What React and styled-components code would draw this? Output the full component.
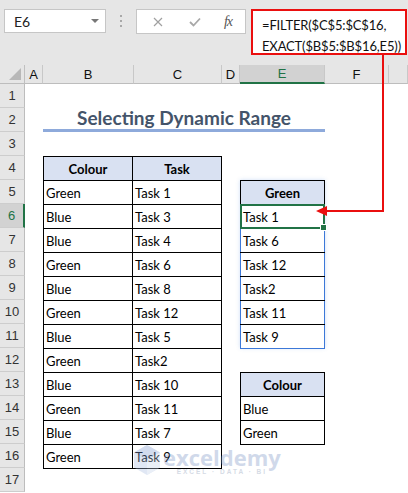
import React from 'react';
import styled, { createGlobalStyle } from 'styled-components';

const GlobalStyle = createGlobalStyle`
  html, body {
    margin: 0;
    padding: 0;
    background: #ffffff;
    overflow: hidden;
  }
  body {
    font-family: Lato, "Open Sans", Arial, sans-serif;
  }
`;

const Page = styled.div`
  position: relative;
  width: 408px;
  height: 493px;
  overflow: hidden;
  background: #ffffff;
`;

/* ---------- formula bar ---------- */

const Toolbar = styled.div`
  height: 65px;
  background: #e6e6e6;
  display: flex;
  align-items: flex-start;
  padding: 9px 0 0 4px;
  box-sizing: border-box;
`;

const NameBox = styled.div`
  width: 102px;
  height: 24px;
  box-sizing: border-box;
  background: #fff;
  border: 1px solid #c6c6c6;
  display: flex;
  align-items: center;
  justify-content: space-between;
  padding: 0 6px 0 9px;
  font-size: 14px;
  color: #222;
`;

const Caret = styled.span`
  width: 0;
  height: 0;
  border-left: 4px solid transparent;
  border-right: 4px solid transparent;
  border-top: 4px solid #777;
`;

const Grip = styled.div`
  width: 30px;
  height: 24px;
  display: flex;
  flex-direction: column;
  align-items: center;
  justify-content: center;
  gap: 3px;
`;

const GripDot = styled.span`
  width: 2px;
  height: 2px;
  background: #a8a8a8;
`;

const FuncBox = styled.div`
  width: 110px;
  height: 25px;
  box-sizing: border-box;
  background: #fff;
  border: 1px solid #c6c6c6;
  display: grid;
  grid-template-columns: 42px 32px 1fr;
  align-items: center;
  justify-items: center;
`;

const Fx = styled.span`
  font-family: "Liberation Serif", serif;
  font-style: italic;
  font-size: 14px;
  color: #555;
  letter-spacing: -1px;
`;

const FormulaBox = styled.div`
  margin-left: 5px;
  width: 156px;
  height: 46px;
  box-sizing: border-box;
  background: #fff;
  border: 2px solid #ea0f0f;
  padding: 4px 0 0 9px;
  font-size: 13px;
  line-height: 21px;
  letter-spacing: -0.15px;
  color: #111;
  white-space: nowrap;
  overflow: hidden;
`;

/* ---------- sheet grid ---------- */

const Sheet = styled.div`
  display: grid;
  grid-template-columns: 25px 18px 91px 88px 18px 85px 64px 1fr;
  grid-template-rows: 19px repeat(17, 24px);
  background: #fff;
`;

const Corner = styled.div`
  grid-column: 1;
  grid-row: 1;
  position: relative;
  background: #e6e6e6;
  border-right: 1px solid #c0c0c0;
  border-bottom: 1px solid #bdbdbd;
  box-sizing: border-box;
  &::after {
    content: '';
    position: absolute;
    right: 3px;
    bottom: 3px;
    border-left: 12px solid transparent;
    border-bottom: 12px solid #b8b8b8;
  }
`;

const ColHead = styled.div`
  grid-row: 1;
  background: ${p => (p.$active ? '#d2d2d2' : '#e6e6e6')};
  color: ${p => (p.$active ? '#217346' : '#111')};
  border-right: 1px solid #c8c8c8;
  border-bottom: ${p => (p.$active ? '2px solid #217346' : '1px solid #bdbdbd')};
  box-sizing: border-box;
  display: flex;
  align-items: center;
  justify-content: center;
  font-size: 13px;
  font-family: "Liberation Sans", Arial, sans-serif;
`;

const RowHead = styled.div`
  grid-column: 1;
  background: ${p => (p.$active ? '#d2d2d2' : '#e6e6e6')};
  color: ${p => (p.$active ? '#217346' : '#333')};
  border-right: ${p => (p.$active ? '2px solid #217346' : '1px solid #bdbdbd')};
  border-bottom: 1px solid #cdcdcd;
  box-sizing: border-box;
  display: flex;
  align-items: center;
  justify-content: center;
  font-size: 13px;
  font-family: "Liberation Sans", Arial, sans-serif;
`;

const Title = styled.div`
  grid-column: 3 / 7;
  grid-row: 3;
  display: flex;
  align-items: flex-end;
  justify-content: center;
  padding-bottom: 0;
  border-bottom: 3px solid #8eaadb;
  font-size: 19px;
  font-weight: 700;
  color: #44546a;
`;

const Block = styled.div`
  grid-column: ${p => p.$col};
  grid-row: ${p => p.$row};
`;

const Table = styled.table`
  width: 100%;
  height: 100%;
  border-collapse: collapse;
  table-layout: fixed;
  font-size: 13px;
  color: #000;
`;

const Head = styled.th`
  background: #d9e1f2;
  border: 1px solid #000;
  font-weight: 700;
  text-align: center;
  padding: 0;
  height: 23px;
`;

const Cell = styled.td`
  position: relative;
  border: 1px solid #000;
  border-left-color: ${p => (p.$spill ? '#3c78d8' : '#000')};
  border-right-color: ${p => (p.$spill ? '#3c78d8' : '#000')};
  border-bottom-color: ${p => (p.$last ? '#3c78d8' : '#000')};
  padding: 0 0 0 2px;
  height: 23px;
  white-space: nowrap;
`;

const Selection = styled.span`
  position: absolute;
  left: -1px;
  top: -1px;
  right: -1px;
  bottom: -1px;
  border: 2px solid #217346;
  pointer-events: none;
`;

const FillHandle = styled.span`
  position: absolute;
  right: -4px;
  bottom: -4px;
  width: 5px;
  height: 5px;
  background: #217346;
  border: 1px solid #fff;
`;

const SpillShadow = styled.div`
  grid-column: 6;
  grid-row: 6 / 13;
  box-shadow: 0 0 4px rgba(60, 120, 216, 0.25);
`;

/* ---------- overlays ---------- */

const Overlay = styled.svg`
  position: absolute;
  left: 0;
  top: 0;
  pointer-events: none;
`;

const Watermark = styled.div`
  position: absolute;
  left: 133px;
  top: 444px;
  display: flex;
  align-items: center;
  gap: 2px;
  opacity: 0.35;
  pointer-events: none;
`;

const MarkText = styled.div`
  display: flex;
  flex-direction: column;
  align-items: center;
`;

const MarkName = styled.span`
  font-family: "Open Sans", Arial, sans-serif;
  font-weight: 700;
  font-size: 22px;
  line-height: 22px;
  color: #7b93c4;
`;

const MarkSub = styled.span`
  font-family: "Liberation Sans", Arial, sans-serif;
  font-weight: 700;
  font-size: 6.5px;
  letter-spacing: 2px;
  color: #8a99b5;
`;

const cols = ['A', 'B', 'C', 'D', 'E', 'F', ''];

const tasks = [
  ['Green', 'Task 1'],
  ['Blue', 'Task 3'],
  ['Blue', 'Task 4'],
  ['Green', 'Task 6'],
  ['Blue', 'Task 8'],
  ['Green', 'Task 12'],
  ['Blue', 'Task 5'],
  ['Green', 'Task2'],
  ['Blue', 'Task 10'],
  ['Green', 'Task 11'],
  ['Blue', 'Task 7'],
  ['Green', 'Task 9'],
];

const filtered = ['Task 1', 'Task 6', 'Task 12', 'Task2', 'Task 11', 'Task 9'];

export default function App() {
  return (
    <Page>
      <GlobalStyle />
      <Toolbar>
        <NameBox>
          E6
          <Caret />
        </NameBox>
        <Grip>
          <GripDot />
          <GripDot />
          <GripDot />
        </Grip>
        <FuncBox>
          <svg width="10" height="10" viewBox="0 0 10 10">
            <path d="M1 1 L9 9 M9 1 L1 9" stroke="#a0a0a0" strokeWidth="1.2" />
          </svg>
          <svg width="12" height="10" viewBox="0 0 12 10">
            <path d="M1 5 L4.5 8.5 L11 1.5" stroke="#a8a8a8" strokeWidth="1.8" fill="none" />
          </svg>
          <Fx>fx</Fx>
        </FuncBox>
        <FormulaBox>
          =FILTER($C$5:$C$16,
          <br />
          EXACT($B$5:$B$16,E5))
        </FormulaBox>
      </Toolbar>

      <Sheet>
        <Corner />
        {cols.map((c, i) => (
          <ColHead key={i} style={{ gridColumn: i + 2 }} $active={c === 'E'}>
            {c}
          </ColHead>
        ))}
        {Array.from({ length: 17 }, (_, i) => (
          <RowHead key={i} style={{ gridRow: i + 2 }} $active={i + 1 === 6}>
            {i + 1}
          </RowHead>
        ))}

        <Title>Selecting Dynamic Range</Title>

        <Block $col="3 / 5" $row="5 / 18">
          <Table>
            <thead>
              <tr>
                <Head>Colour</Head>
                <Head>Task</Head>
              </tr>
            </thead>
            <tbody>
              {tasks.map(([c, t]) => (
                <tr key={t}>
                  <Cell>{c}</Cell>
                  <Cell>{t}</Cell>
                </tr>
              ))}
            </tbody>
          </Table>
        </Block>

        <SpillShadow />
        <Block $col="6" $row="6 / 13">
          <Table>
            <thead>
              <tr>
                <Head>Green</Head>
              </tr>
            </thead>
            <tbody>
              {filtered.map((t, i) => (
                <tr key={t}>
                  <Cell $spill $last={i === filtered.length - 1}>
                    {t}
                    {i === 0 && (
                      <Selection>
                        <FillHandle />
                      </Selection>
                    )}
                  </Cell>
                </tr>
              ))}
            </tbody>
          </Table>
        </Block>

        <Block $col="6" $row="14 / 17">
          <Table>
            <thead>
              <tr>
                <Head>Colour</Head>
              </tr>
            </thead>
            <tbody>
              <tr>
                <Cell>Blue</Cell>
              </tr>
              <tr>
                <Cell>Green</Cell>
              </tr>
            </tbody>
          </Table>
        </Block>
      </Sheet>

      <Overlay width="408" height="493" viewBox="0 0 408 493">
        <path d="M383 55 V211 H324" stroke="#ea0f0f" strokeWidth="2" fill="none" />
        <polygon points="316,211 327,206 327,216" fill="#ea0f0f" />
      </Overlay>

      <Watermark>
        <svg width="28" height="32" viewBox="0 0 28 32">
          <polygon points="14,1 27,8.5 27,23.5 14,31 1,23.5 1,8.5" fill="#a9bde0" />
          <polygon points="14,1 27,8.5 14,16 1,8.5" fill="#7f9bd0" />
          <polygon points="14,16 27,8.5 27,23.5 14,31" fill="#c4d2ea" />
        </svg>
        <MarkText>
          <MarkName>exceldemy</MarkName>
          <MarkSub>EXCEL · DATA · BI</MarkSub>
        </MarkText>
      </Watermark>
    </Page>
  );
}
